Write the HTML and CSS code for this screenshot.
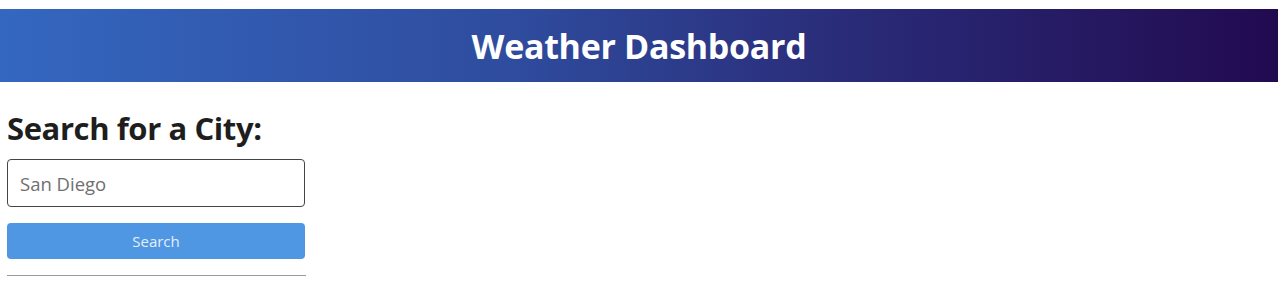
FILE: index.html
```html
<!DOCTYPE html>
<html lang="en">
<head>
<meta charset="utf-8">
<title>Weather Dashboard</title>
<link rel="stylesheet" href="styles.css">
</head>
<body>
  <header class="banner">
    <h1 class="banner-title">Weather Dashboard</h1>
  </header>
  <main class="content">
    <section class="search-panel">
      <h2 class="search-title">Search for a City:</h2>
      <input class="search-input" type="text" placeholder="San Diego">
      <button class="search-btn" type="button">Search</button>
      <hr class="divider">
    </section>
  </main>
</body>
</html>
```
FILE: styles.css
```css
* { box-sizing: border-box; }
html, body { margin: 0; padding: 0; background: #fff; }
body {
  font-family: "Open Sans", "Noto Sans", sans-serif;
  color: #212529;
}
.banner {
  margin-top: 9px;
  height: 73px;
  display: flex;
  align-items: center;
  justify-content: center;
  background: linear-gradient(to right, #3467c0 0%, #2f4c9e 40%, #2a2d7a 65%, #220a50 100%);
}
.banner-title {
  margin: 0;
  color: #fff;
  font-size: 34px;
  font-weight: 700;
  line-height: 1;
  letter-spacing: -0.3px;
}
.content {
  padding: 0 7px;
}
.search-panel {
  width: 298px;
  display: flex;
  flex-direction: column;
}
.search-title {
  margin: 28px 0 0;
  font-size: 31px;
  font-weight: 700;
  line-height: 37px;
  letter-spacing: -0.4px;
  white-space: nowrap;
  color: #1e1e1e;
}
.search-input {
  margin-top: 12px;
  height: 48px;
  width: 298px;
  border: 1px solid #444;
  border-radius: 4px;
  padding: 0 12px;
  font-family: inherit;
  font-size: 18.5px;
  color: #333;
}
.search-input::placeholder { color: #6f6f6f; }
.search-btn {
  margin-top: 16px;
  height: 36px;
  width: 298px;
  border: none;
  border-radius: 4px;
  background: #4f96e3;
  color: #e6eefa;
  font-family: inherit;
  font-size: 15px;
  padding: 0;
}
.divider {
  margin: 16px 0 0;
  width: 299px;
  border: none;
  border-top: 1px solid #9a9a9a;
  height: 0;
}
```
